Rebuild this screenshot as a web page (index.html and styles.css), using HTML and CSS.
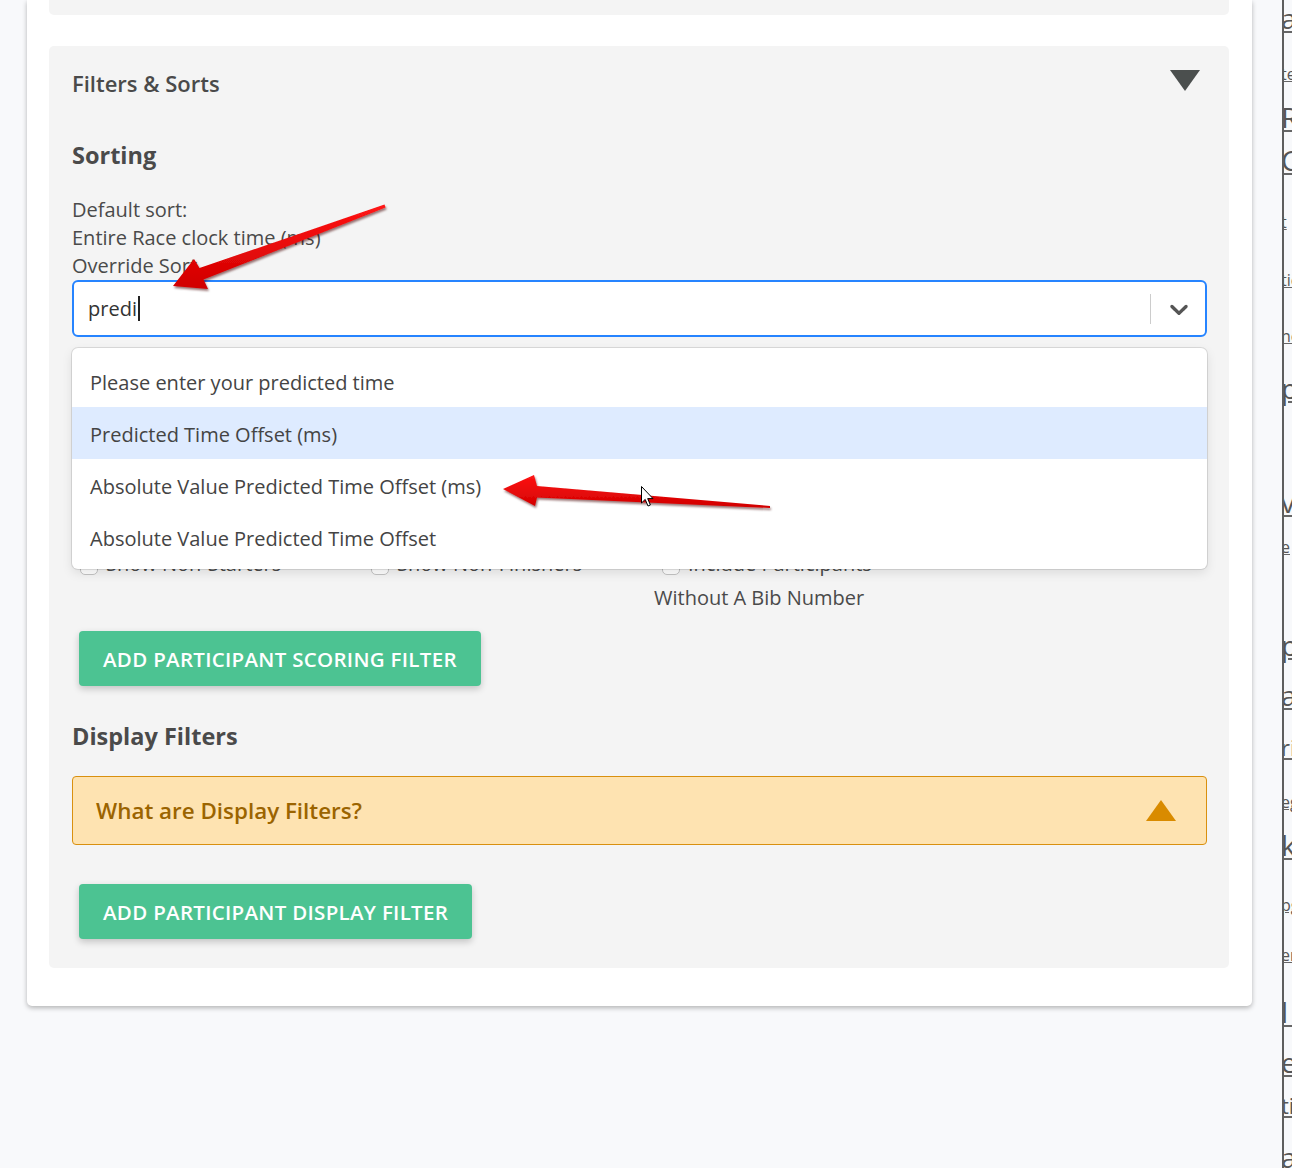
FILE: index.html
```html
<!DOCTYPE html>
<html lang="en">
<head>
<meta charset="utf-8">
<title>Filters &amp; Sorts</title>
<link rel="stylesheet" href="styles.css">
</head>
<body>
<div class="screen">
  <div class="main">
    <div class="card">
      <div class="panel panel-top"></div>
      <section class="panel filters">
        <header class="panel-head">
          <h2>Filters &amp; Sorts</h2>
          <span class="tri-down"></span>
        </header>

        <h3 class="section-title first">Sorting</h3>
        <div class="sort-info">
          <div>Default sort:</div>
          <div>Entire Race clock time (ms)</div>
          <div>Override Sort</div>
        </div>

        <div class="select-wrap">
          <div class="select">
            <div class="value">predi<span class="caret"></span></div>
            <span class="sep"></span>
            <span class="indicator">
              <svg width="30" height="30" viewBox="0 0 20 20"><path fill="#555" d="M4.516 7.548c0.436-0.446 1.043-0.481 1.576 0l3.908 3.747 3.908-3.747c0.533-0.481 1.141-0.446 1.574 0 0.436 0.445 0.408 1.197 0 1.615-0.406 0.418-4.695 4.502-4.695 4.502-0.217 0.223-0.502 0.335-0.787 0.335s-0.57-0.112-0.789-0.335c0 0-4.287-4.084-4.695-4.502s-0.436-1.170 0-1.615z"/></svg>
            </span>
          </div>
          <div class="menu">
            <div class="option">Please enter your predicted time</div>
            <div class="option focused">Predicted Time Offset (ms)</div>
            <div class="option">Absolute Value Predicted Time Offset (ms)</div>
            <div class="option">Absolute Value Predicted Time Offset</div>
          </div>
        </div>

        <div class="checks">
          <label class="check-col"><span class="box"></span>Show Non-Starters</label>
          <label class="check-col"><span class="box"></span>Show Non-Finishers</label>
          <label class="check-col"><span class="box"></span>Include Participants<br>Without A Bib Number</label>
        </div>

        <button class="btn btn-scoring">Add Participant Scoring Filter</button>

        <h3 class="section-title display">Display Filters</h3>
        <div class="info-box display-box">What are Display Filters?<span class="tri-up"></span></div>

        <button class="btn btn-display">Add Participant Display Filter</button>
      </section>
    </div>
  </div>
  <aside class="side">
    <div class="big">a</div>
    <div class="small">te</div>
    <div class="big">R</div>
    <div class="big">C</div>
    <div class="small">t</div>
    <div class="small">tic</div>
    <div class="small">nc</div>
    <div class="big">p</div>
    <div class="big">v</div>
    <div class="small">e</div>
    <div class="big">p</div>
    <div class="big">a</div>
    <div class="mid">ri</div>
    <div class="small">eg</div>
    <div class="big">k</div>
    <div class="small">pg</div>
    <div class="small">er</div>
    <div class="big">l|</div>
    <div class="big">e</div>
    <div class="mid">ti</div>
    <div class="big">a</div>
  </aside>

  <svg class="annotations" width="1292" height="1168" viewBox="0 0 1292 1168">
    <defs>
      <linearGradient id="red" x1="0" y1="0" x2="0" y2="1">
        <stop offset="0" stop-color="#ff1414"/>
        <stop offset="1" stop-color="#d00000"/>
      </linearGradient>
      <filter id="sh" x="-20%" y="-20%" width="140%" height="160%">
        <feDropShadow dx="1" dy="2" stdDeviation="1.2" flood-color="#400" flood-opacity="0.55"/>
      </filter>
    </defs>
    <polygon filter="url(#sh)" fill="url(#red)" points="384.5,204.6 199.5,268 194,259 173,286 208,289 203.5,279.5 385.6,207.4"/>
    <polygon filter="url(#sh)" fill="url(#red)" points="770,506 537,486 534,475 503,489 535,506 537,497.5 770,508"/>
    <path class="cursor" d="M641.5 486.5 L641.5 503 L645.2 499.4 L648 506 L650.4 505 L647.7 498.6 L653 498.6 Z" fill="#fff" stroke="#000" stroke-width="1"/>
  </svg>
</div>
</body>
</html>
```

FILE: styles.css
```css
* { box-sizing: border-box; }

body {
  margin: 0;
  background: #f8f9fb;
  font-family: "Open Sans", "Noto Sans", sans-serif;
  color: #4a4a4a;
}

.screen {
  position: relative;
  display: flex;
  height: 1168px;
  overflow: hidden;
}

.main {
  flex: none;
  width: 1282px;
  padding-left: 27px;
}

.card {
  width: 1225px;
  background: #fff;
  border-radius: 0 0 5px 5px;
  box-shadow: 0 2px 5px rgba(0, 0, 0, 0.28);
  padding: 0 23px 38px 22px;
}

.panel {
  background: #f4f4f4;
  border-radius: 5px;
}

.panel-top {
  height: 15px;
  border-radius: 0 0 5px 5px;
  margin-bottom: 31px;
}

.filters {
  padding: 21px 22px 29px 23px;
}

.panel-head {
  display: flex;
  justify-content: space-between;
  align-items: flex-start;
}

.panel-head h2 {
  margin: 0;
  font-size: 22px;
  font-weight: 600;
  line-height: 32px;
}

.tri-down {
  width: 0;
  height: 0;
  margin: 3px 7px 0 0;
  border-left: 15px solid transparent;
  border-right: 15px solid transparent;
  border-top: 21px solid #4b4f4e;
}

.section-title {
  margin: 0;
  font-size: 23.5px;
  font-weight: 700;
  line-height: 32px;
}

.section-title.first { margin-top: 40px; }
.section-title.display { margin-top: 34px; }

.sort-info {
  margin-top: 25px;
  font-size: 20px;
  line-height: 28px;
}

.select-wrap {
  position: relative;
}

.select {
  display: flex;
  align-items: center;
  height: 57px;
  background: #fff;
  border: 2px solid #2684ff;
  border-radius: 6px;
}

.value {
  flex: 1;
  padding-left: 14px;
  font-size: 20px;
  color: #333;
  display: flex;
  align-items: center;
}

.caret {
  display: inline-block;
  width: 2px;
  height: 25px;
  margin-left: 1px;
  background: #222;
}

.sep {
  width: 1px;
  height: 30px;
  background: #cccccc;
}

.indicator {
  display: flex;
  padding: 0 11px 0 13px;
}

.menu {
  position: absolute;
  top: calc(100% + 11px);
  left: 0;
  right: 0;
  z-index: 2;
  background: #fff;
  border-radius: 6px;
  box-shadow: 0 0 0 1px rgba(0, 0, 0, 0.1), 0 4px 11px rgba(0, 0, 0, 0.1);
  padding: 7px 0 6px;
}

.option {
  display: flex;
  align-items: center;
  height: 52px;
  padding: 2px 0 0 18px;
  font-size: 20px;
  color: #444;
}

.option.focused {
  background: #deebff;
}

.info-box {
  display: flex;
  justify-content: space-between;
  align-items: center;
  height: 69px;
  margin-top: 24px;
  padding: 0 30px 0 23px;
  background: #fee3b1;
  border: 1px solid #d9900f;
  border-radius: 4px;
  font-size: 22.4px;
  font-weight: 600;
  color: #9b6400;
}

.tri-up {
  width: 0;
  height: 0;
  border-left: 15px solid transparent;
  border-right: 15px solid transparent;
  border-bottom: 21px solid #d98b00;
}

.checks {
  display: flex;
  margin-top: 210px;
  font-size: 20px;
  line-height: 34px;
}

.check-col {
  width: 291px;
  flex: none;
}

.box {
  display: inline-block;
  width: 18px;
  height: 18px;
  margin: 0 8px;
  vertical-align: -4px;
  background: #fff;
  border: 1px solid #c4c4c4;
  border-radius: 5px;
}

.btn {
  display: block;
  height: 55px;
  margin-left: 7px;
  padding: 0 24px;
  border: none;
  border-radius: 4px;
  background: #4cc392;
  color: #fff;
  font-family: inherit;
  font-size: 20.5px;
  font-weight: 600;
  letter-spacing: 0.3px;
  text-transform: uppercase;
  box-shadow: 0 3px 7px rgba(0, 0, 0, 0.2);
}

.btn-scoring { margin-top: 16px; }
.btn-display { margin-top: 39px; }

.side {
  flex: 1;
  overflow: hidden;
  border-left: 2px solid #5e5e5e;
  color: #555;
  text-indent: -3px;
  white-space: nowrap;
}

.side div {
  height: 30px;
  line-height: 30px;
  text-decoration: underline;
  text-decoration-color: #666;
}

.side .big { font-size: 28px; }
.side .mid { font-size: 22px; }
.side .small { font-size: 16px; }

.side div:nth-child(1) { margin-top: 3px; }
.side div:nth-child(2) { margin-top: 26px; }
.side div:nth-child(3) { margin-top: 13px; }
.side div:nth-child(4) { margin-top: 13px; }
.side div:nth-child(5) { margin-top: 32px; }
.side div:nth-child(6) { margin-top: 28px; }
.side div:nth-child(7) { margin-top: 26px; }
.side div:nth-child(8) { margin-top: 22px; }
.side div:nth-child(9) { margin-top: 84px; }
.side div:nth-child(10) { margin-top: 15px; }
.side div:nth-child(11) { margin-top: 68px; }
.side div:nth-child(12) { margin-top: 20px; }
.side div:nth-child(13) { margin-top: 22px; }
.side div:nth-child(14) { margin-top: 25px; }
.side div:nth-child(15) { margin-top: 13px; }
.side div:nth-child(16) { margin-top: 30px; }
.side div:nth-child(17) { margin-top: 20px; }
.side div:nth-child(18) { margin-top: 27px; }
.side div:nth-child(19) { margin-top: 20px; }
.side div:nth-child(20) { margin-top: 13px; }
.side div:nth-child(21) { margin-top: 22px; }

.annotations {
  position: absolute;
  top: 0;
  left: 0;
  z-index: 5;
  pointer-events: none;
}
```
